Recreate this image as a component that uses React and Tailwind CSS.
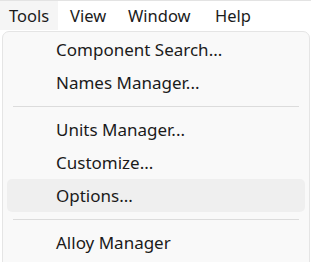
import React from "react";

const menus = [
  { label: "Tools", w: "w-[58px]" },
  { label: "View", w: "w-[55px]" },
  { label: "Window", w: "w-[84px]" },
  { label: "Help", w: "w-[60px]" },
];

const groups = [
  ["Component Search...", "Names Manager..."],
  ["Units Manager...", "Customize...", "Options..."],
  ["Alloy Manager"],
];

const App = () => {
  return (
    <div
      className="w-[311px] h-[262px] bg-white overflow-hidden border-t border-[#e3e3e3] text-[#1b1b1b]"
      style={{ fontFamily: '"Noto Sans", "Open Sans", sans-serif' }}
    >
      {/* Menu bar */}
      <div className="flex h-[29px] items-center text-[16.5px]">
        {menus.map((m, i) => (
          <div
            key={m.label}
            className={`h-full flex items-center pl-[9px] mr-[3px] pt-[2px] ${m.w} ${i === 0 ? "bg-[#f5f5f5]" : ""}`}
          >
            {m.label}
          </div>
        ))}
      </div>

      {/* Dropdown */}
      <div className="ml-[2px] mt-[1px] w-[308px] h-[240px] bg-[#f9f9f9] border border-[#e5e5e5] rounded-[7px] pt-[1px] px-[4px] text-[17px]">
        {groups.map((g, gi) => (
          <div key={gi}>
            {gi > 0 && (
              <div className="h-[14px] flex items-center px-[6px]">
                <div className="h-px w-full bg-[#dcdcdc]" />
              </div>
            )}
            {g.map((item) => (
              <div
                key={item}
                className={`h-[33px] flex items-center pl-[49px] rounded-[5px] ${
                  item === "Options..." ? "bg-[#efefef]" : ""
                }`}
              >
                {item}
              </div>
            ))}
          </div>
        ))}
      </div>
    </div>
  );
};

export default App;
